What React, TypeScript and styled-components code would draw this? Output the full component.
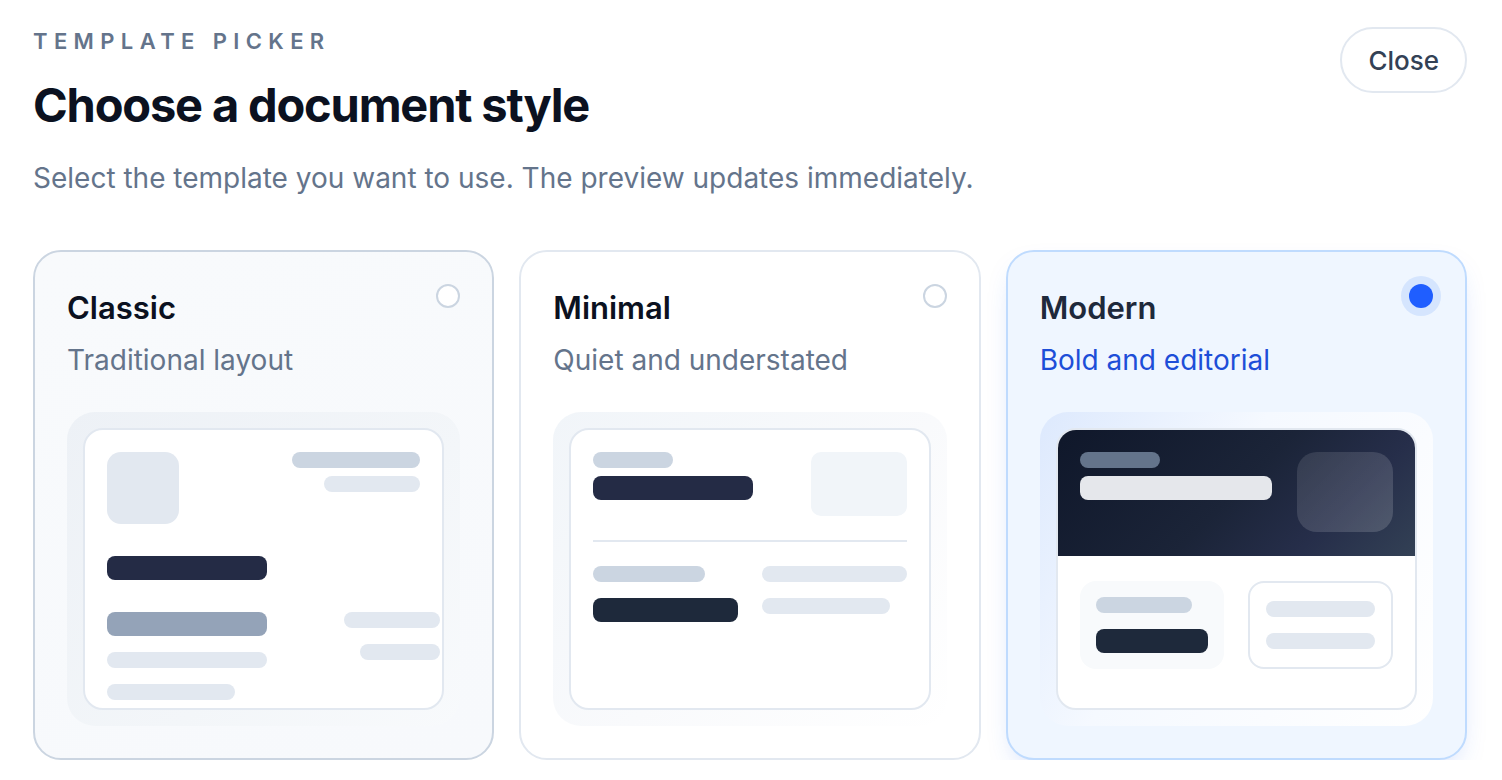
import styled, { createGlobalStyle, css } from "styled-components";

const GlobalStyle = createGlobalStyle`
  * { box-sizing: border-box; }
  html, body { margin: 0; padding: 0; background: #ffffff; }
  body {
    font-family: "Inter", "Noto Sans", sans-serif;
    -webkit-font-smoothing: antialiased;
  }
`;

const Page = styled.div`
  padding: 27px 35px 0 33px;
  background: #ffffff;
`;

const Header = styled.header`
  display: flex;
  justify-content: space-between;
  align-items: flex-start;
`;

const Eyebrow = styled.div`
  font-size: 22px;
  line-height: 28px;
  font-weight: 600;
  letter-spacing: 0.29em;
  text-transform: uppercase;
  color: #64748b;
`;

const Title = styled.h1`
  margin: 22px 0 0;
  font-size: 47px;
  line-height: 56px;
  font-weight: 700;
  letter-spacing: -0.025em;
  color: #0b1120;
`;

const Lead = styled.p`
  margin: 27px 0 0;
  font-size: 28px;
  line-height: 36px;
  color: #64748b;
`;

const CloseButton = styled.button`
  height: 66px;
  padding: 0 26px;
  border: 2px solid #e2e8f0;
  border-radius: 999px;
  background: #ffffff;
  font-family: inherit;
  font-size: 26px;
  font-weight: 500;
  color: #334155;
  cursor: pointer;
`;

const Grid = styled.div`
  margin-top: 54px;
  display: grid;
  grid-template-columns: repeat(3, 1fr);
  gap: 25px;
`;

type Tone = "muted" | "plain" | "active";

const Card = styled.div<{ $tone: Tone }>`
  position: relative;
  border-radius: 28px;
  padding: 32px;
  border: 2px solid #e2e8f0;
  background: #ffffff;
  cursor: pointer;
  ${(p) =>
    p.$tone === "muted" &&
    css`
      border-color: #cbd5e1;
      background: linear-gradient(160deg, #f8fafc 0%, #f7f9fc 100%);
    `}
  ${(p) =>
    p.$tone === "active" &&
    css`
      border-color: #bfdbfe;
      background: #eff6ff;
      box-shadow: 0 12px 30px -14px rgba(37, 99, 235, 0.35);
    `}
`;

const Radio = styled.span<{ $on?: boolean }>`
  position: absolute;
  top: 32px;
  right: 32px;
  width: 24px;
  height: 24px;
  border-radius: 50%;
  border: 2px solid #cbd5e1;
  background: #ffffff;
  ${(p) =>
    p.$on &&
    css`
      border: none;
      background: #1f5eff;
      box-shadow: 0 0 0 8px rgba(59, 130, 246, 0.14);
    `}
`;

const CardTitle = styled.h2<{ $active?: boolean }>`
  margin: 0;
  font-size: 31px;
  line-height: 48px;
  font-weight: 600;
  color: ${(p) => (p.$active ? "#1e293b" : "#0b1120")};
`;

const CardText = styled.p<{ $active?: boolean }>`
  margin: 10px 0 0;
  font-size: 28px;
  line-height: 36px;
  color: ${(p) => (p.$active ? "#1d4ed8" : "#64748b")};
`;

const Frame = styled.div<{ $tone: Tone }>`
  margin-top: 34px;
  padding: 16px;
  border-radius: 28px;
  background: ${(p) =>
    p.$tone === "muted"
      ? "linear-gradient(135deg, #edf1f6 0%, #f3f6f9 60%, #f8fafc 100%)"
      : p.$tone === "active"
      ? "linear-gradient(120deg, #dde9fd 0%, #f5f9ff 40%, #ffffff 100%)"
      : "linear-gradient(135deg, #f1f5f9 0%, #f9fafc 55%, #ffffff 100%)"};
`;

const Sheet = styled.div`
  height: 282px;
  border: 2px solid #e2e8f0;
  border-radius: 20px;
  background: #ffffff;
  overflow: hidden;
`;

const SheetBody = styled.div`
  padding: 22px;
`;

const Bar = styled.div<{ $w?: string; $h?: number; $c?: string }>`
  width: ${(p) => p.$w || "100%"};
  height: ${(p) => p.$h || 16}px;
  border-radius: 8px;
  background: ${(p) => p.$c || "#e2e8f0"};
  flex-shrink: 0;
`;

const Row = styled.div<{ $top?: number }>`
  display: flex;
  justify-content: space-between;
  align-items: flex-start;
  margin-top: ${(p) => p.$top || 0}px;
`;

const Stack = styled.div<{ $gap: number; $end?: boolean; $pull?: number }>`
  display: flex;
  flex-direction: column;
  gap: ${(p) => p.$gap}px;
  align-items: ${(p) => (p.$end ? "flex-end" : "flex-start")};
  margin-right: ${(p) => (p.$pull ? -p.$pull : 0)}px;
`;

const Logo = styled.div`
  width: 72px;
  height: 72px;
  border-radius: 14px;
  background: #e2e8f0;
`;

const Thumb = styled.div`
  width: 96px;
  height: 64px;
  border-radius: 10px;
  background: #f1f5f9;
`;

const Divider = styled.hr`
  margin: 24px 0;
  border: none;
  height: 2px;
  background: #e2e8f0;
`;

const Columns = styled.div`
  display: grid;
  grid-template-columns: 1fr 1fr;
  gap: 24px;
`;

const Hero = styled.div`
  margin: -2px -2px 0;
  padding: 24px;
  display: flex;
  justify-content: space-between;
  background: linear-gradient(135deg, #0f172a 0%, #1b2438 50%, #262e4a 75%, #334155 100%);
`;

const HeroMark = styled.div`
  width: 96px;
  height: 80px;
  border-radius: 20px;
  background: linear-gradient(135deg, rgba(255, 255, 255, 0.1), rgba(255, 255, 255, 0.16));
`;

const ModernBody = styled.div`
  padding: 25px 22px 0;
`;

const Tile = styled.div<{ $outline?: boolean }>`
  display: flex;
  flex-direction: column;
  justify-content: center;
  gap: 16px;
  padding: 16px;
  border-radius: 16px;
  background: ${(p) => (p.$outline ? "#ffffff" : "#f8fafc")};
  border: ${(p) => (p.$outline ? "2px solid #e2e8f0" : "none")};
`;

const ClassicPreview = () => (
  <SheetBody>
    <Row>
      <Logo />
      <Stack $gap={8} $end>
        <Bar $w="128px" $c="#cbd5e1" />
        <Bar $w="96px" />
      </Stack>
    </Row>
    <Row $top={32}>
      <Bar $w="160px" $h={24} $c="#242b45" />
    </Row>
    <Row $top={32}>
      <Stack $gap={16}>
        <Bar $w="160px" $h={24} $c="#94a3b8" />
        <Bar $w="160px" />
        <Bar $w="128px" />
      </Stack>
      <Stack $gap={16} $end $pull={20}>
        <Bar $w="96px" />
        <Bar $w="80px" />
      </Stack>
    </Row>
  </SheetBody>
);

const MinimalPreview = () => (
  <SheetBody>
    <Row>
      <Stack $gap={8}>
        <Bar $w="80px" $c="#cbd5e1" />
        <Bar $w="160px" $h={24} $c="#242b45" />
      </Stack>
      <Thumb />
    </Row>
    <Divider />
    <Columns>
      <Stack $gap={16}>
        <Bar $w="112px" $c="#cbd5e1" />
        <Bar $h={24} $c="#1e293b" />
      </Stack>
      <Stack $gap={16}>
        <Bar />
        <Bar $w="128px" />
      </Stack>
    </Columns>
  </SheetBody>
);

const ModernPreview = () => (
  <>
    <Hero>
      <Stack $gap={8}>
        <Bar $w="80px" $c="#64748b" />
        <Bar $w="192px" $h={24} $c="#e5e7eb" />
      </Stack>
      <HeroMark />
    </Hero>
    <ModernBody>
      <Columns>
        <Tile>
          <Bar $w="96px" $c="#cbd5e1" />
          <Bar $h={24} $c="#1e293b" />
        </Tile>
        <Tile $outline>
          <Bar />
          <Bar />
        </Tile>
      </Columns>
    </ModernBody>
  </>
);

const templates: { id: string; name: string; blurb: string; tone: Tone; Preview: () => JSX.Element }[] = [
  { id: "classic", name: "Classic", blurb: "Traditional layout", tone: "muted", Preview: ClassicPreview },
  { id: "minimal", name: "Minimal", blurb: "Quiet and understated", tone: "plain", Preview: MinimalPreview },
  { id: "modern", name: "Modern", blurb: "Bold and editorial", tone: "active", Preview: ModernPreview },
];

const App = () => {
  return (
    <>
      <GlobalStyle />
      <Page>
        <Header>
          <div>
            <Eyebrow>Template picker</Eyebrow>
            <Title>Choose a document style</Title>
            <Lead>Select the template you want to use. The preview updates immediately.</Lead>
          </div>
          <CloseButton>Close</CloseButton>
        </Header>

        <Grid>
          {templates.map(({ id, name, blurb, tone, Preview }) => {
            const active = tone === "active";
            return (
              <Card key={id} $tone={tone}>
                <Radio $on={active} />
                <CardTitle $active={active}>{name}</CardTitle>
                <CardText $active={active}>{blurb}</CardText>
                <Frame $tone={tone}>
                  <Sheet>
                    <Preview />
                  </Sheet>
                </Frame>
              </Card>
            );
          })}
        </Grid>
      </Page>
    </>
  );
};

export default App;
